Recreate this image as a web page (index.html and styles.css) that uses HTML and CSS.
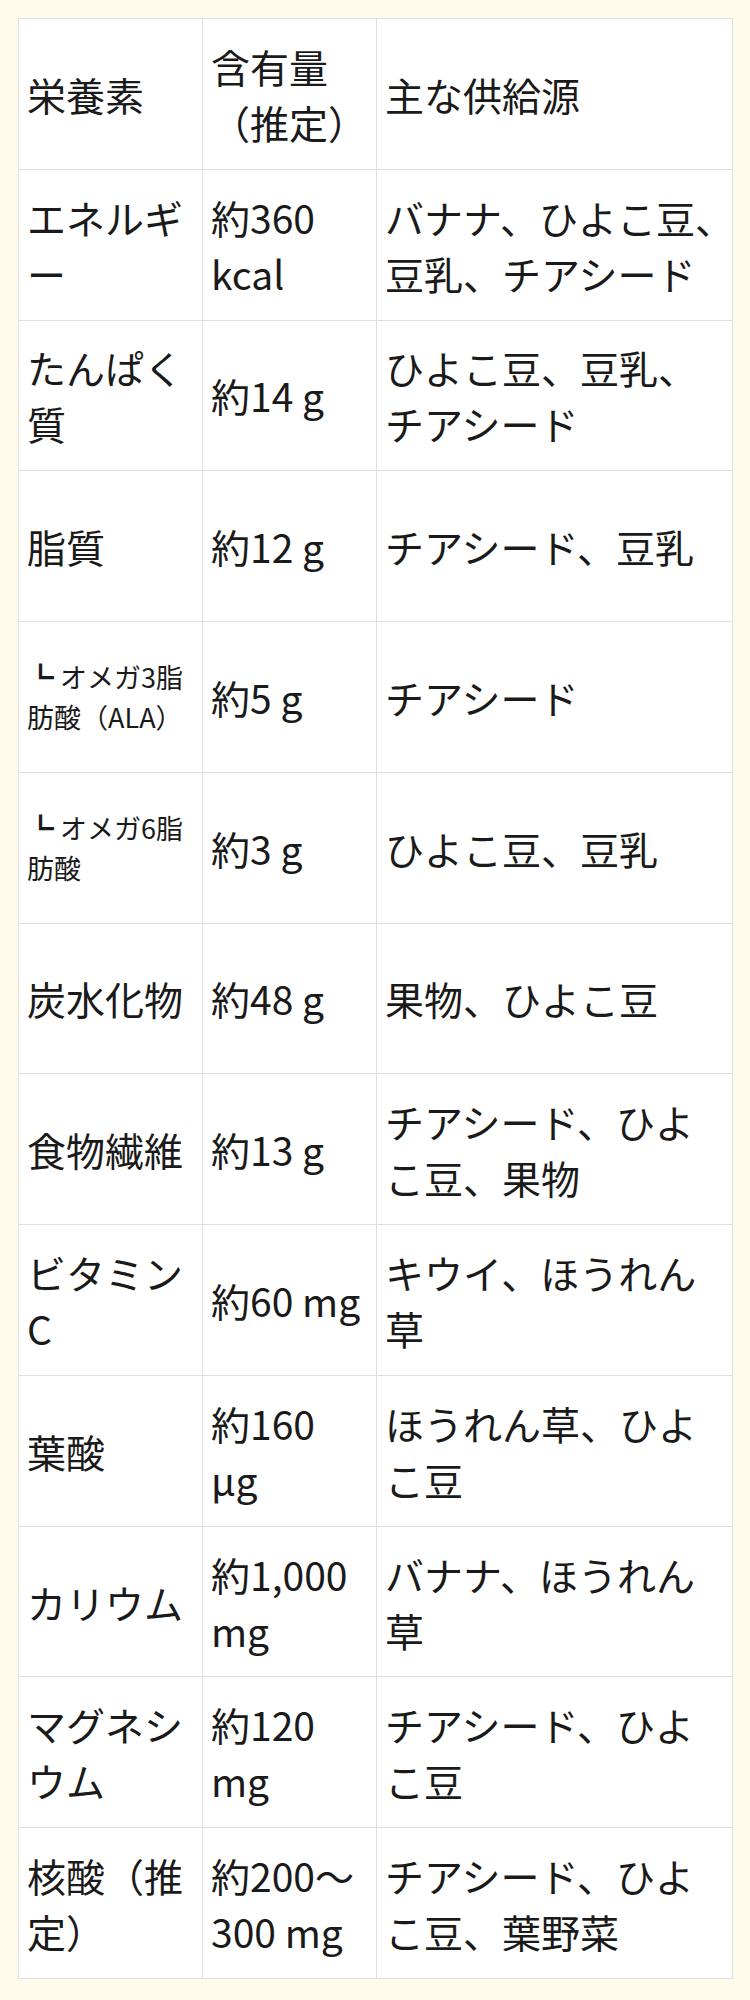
FILE: index.html
```html
<!DOCTYPE html>
<html lang="ja">
<head>
<meta charset="utf-8">
<title>栄養素</title>
<link rel="stylesheet" href="styles.css">
</head>
<body>
<div class="page">
<table class="nutri">
<colgroup><col class="c1"><col class="c2"><col class="c3"></colgroup>
<tr><td>栄養素</td><td>含有量（推定）</td><td>主な供給源</td></tr>
<tr><td>エネルギー</td><td>約360 kcal</td><td><span class="nw">バナナ、ひよこ豆、</span>豆乳、チアシード</td></tr>
<tr><td>たんぱく質</td><td>約14 g</td><td>ひよこ豆、豆乳、チアシード</td></tr>
<tr><td>脂質</td><td>約12 g</td><td>チアシード、豆乳</td></tr>
<tr><td><span class="sub">┗ オメガ3脂肪酸（ALA）</span></td><td>約5 g</td><td>チアシード</td></tr>
<tr><td><span class="sub">┗ オメガ6脂肪酸</span></td><td>約3 g</td><td>ひよこ豆、豆乳</td></tr>
<tr><td>炭水化物</td><td>約48 g</td><td>果物、ひよこ豆</td></tr>
<tr><td>食物繊維</td><td>約13 g</td><td>チアシード、ひよこ豆、果物</td></tr>
<tr><td>ビタミンC</td><td>約60 mg</td><td>キウイ、ほうれん草</td></tr>
<tr><td>葉酸</td><td>約160 µg</td><td>ほうれん草、ひよこ豆</td></tr>
<tr><td>カリウム</td><td>約1,000 mg</td><td>バナナ、ほうれん草</td></tr>
<tr><td>マグネシウム</td><td>約120 mg</td><td>チアシード、ひよこ豆</td></tr>
<tr><td>核酸（推定）</td><td>約200〜300 mg</td><td>チアシード、ひよこ豆、葉野菜</td></tr>
</table>
</div>
</body>
</html>
```

FILE: styles.css
```css
html, body {
  margin: 0;
  padding: 0;
  background: #fffbeb;
}
.page {
  padding: 18px;
}
.nutri {
  width: 714px;
  border-collapse: collapse;
  table-layout: fixed;
  background: #ffffff;
  font-family: "Noto Sans CJK JP", "Noto Sans", sans-serif;
  font-size: 39px;
  line-height: 56px;
  color: #1a1a1a;
}
.c1 { width: 184px; }
.c2 { width: 174px; }
.c3 { width: 356px; }
.nutri tr {
  height: 150.77px;
}
.nutri td {
  border: 1px solid #e0e0e0;
  padding: 0 12px 0 8px;
  vertical-align: middle;
  text-align: left;
  word-wrap: break-word;
}
.nw {
  white-space: nowrap;
}
.sub {
  display: block;
  font-size: 27px;
  line-height: 40px;
}
```
